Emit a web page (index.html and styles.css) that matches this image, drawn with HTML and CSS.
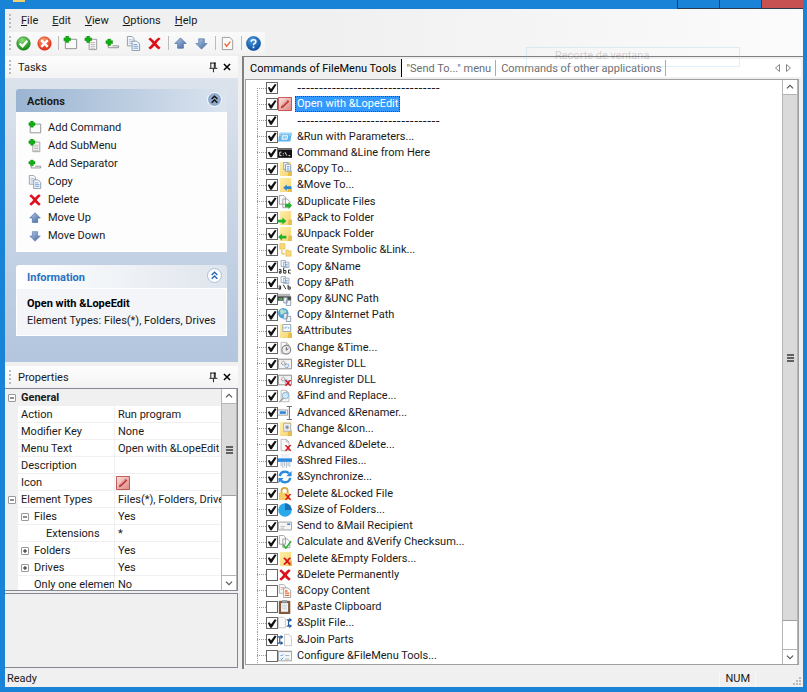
FILE: index.html
```html
<!DOCTYPE html>
<html lang="en">
<head>
    <meta charset="UTF-8">
    <meta name="viewport" content="width=device-width, initial-scale=1.0">
    <title>FileMenu Tools</title>
    <link rel="stylesheet" href="styles.css">
</head>
<body>

    <!-- Icon set -->
    <svg class="sprite" aria-hidden="true">
        <defs>
            <radialGradient id="g-green" cx="40%" cy="25%" r="75%"><stop offset="0" stop-color="#8fdc7c"/><stop offset="1" stop-color="#148a14"/></radialGradient>
            <radialGradient id="g-red" cx="40%" cy="25%" r="75%"><stop offset="0" stop-color="#ff9a6b"/><stop offset="1" stop-color="#e22a12"/></radialGradient>
            <radialGradient id="g-blue" cx="40%" cy="25%" r="75%"><stop offset="0" stop-color="#4b9be0"/><stop offset="1" stop-color="#0a4fa0"/></radialGradient>
            <linearGradient id="g-arrow" x1="0" y1="0" x2="1" y2="1"><stop offset="0" stop-color="#b4c8e4"/><stop offset="1" stop-color="#44689f"/></linearGradient>
            <linearGradient id="g-folder" x1="0" y1="0" x2="1" y2="1"><stop offset="0" stop-color="#fff0a8"/><stop offset="1" stop-color="#f5d272"/></linearGradient>
            <linearGradient id="g-pen" x1="0" y1="0" x2="1" y2="1"><stop offset="0" stop-color="#fbe3e1"/><stop offset="1" stop-color="#df8480"/></linearGradient>
        </defs>
        <symbol id="plus" viewBox="0 0 16 16"><path d="M3 0h3v2h2v3H6v2H3V5H1V2h2z" fill="#10b010" stroke="#078007" stroke-width=".5"/></symbol>
        <symbol id="page" viewBox="0 0 16 16"><path d="M3.500 1.500h6l3 3v10h-9z" fill="#fafafa" stroke="#b5b5b5"/><path d="M9.500 1.500v3h3" fill="none" stroke="#b5b5b5"/></symbol>
        <symbol id="folder" viewBox="0 0 16 16"><path d="M2 0h13v16H2z" fill="url(#g-folder)"/><path d="M12 10h4v6h-5z" fill="#e8bd4c"/></symbol>
        <symbol id="pages" viewBox="0 0 16 16"><path d="M1.500.5h5l2 2v8h-7z" fill="#f5f7fa" stroke="#909aa6"/><path d="M3 4h4M3 6h4M3 8h3" stroke="#a9bdd3"/><path d="M6.500 5.500h5l3 3v7h-8z" fill="#f3f7fc" stroke="#8796a8"/><path d="M8 9h4M8 11h5M8 13h5" stroke="#6c9fd8"/></symbol>
        <symbol id="cross" viewBox="0 0 16 16"><path d="M1.500 3.500l2-2q2.500 2 4.500 4 2-2.500 4.500-4l2 1.500q-2.500 2-4.500 5 2 2.500 4.500 4.500l-2 2q-2.500-2-4.500-4-2 2-4.500 4l-2-2q2.500-2 4.500-4.500-2-2.500-4.500-4.500z" fill="#dd0f1b"/></symbol>
        <symbol id="ok" viewBox="0 0 16 16"><circle cx="8" cy="8" r="7.200" fill="url(#g-green)" stroke="#128012" stroke-width=".6"/><path d="M4 8l3 3 5-6" fill="none" stroke="#fff" stroke-width="2.500"/></symbol>
        <symbol id="cancel" viewBox="0 0 16 16"><circle cx="8" cy="8" r="7.200" fill="url(#g-red)" stroke="#d52b12" stroke-width=".6"/><path d="M4.500 4.500l7 7m0-7l-7 7" stroke="#fff" stroke-width="2.600"/></symbol>
        <symbol id="add-command" viewBox="0 0 16 16"><path d="M2.500 5V13.500h12v-10H8" fill="#fafafa" stroke="#8d8d8d"/><use href="#plus"/></symbol>
        <symbol id="add-submenu" viewBox="0 0 16 16"><path d="M5.500 3.500h8v11h-8z" fill="#fafafa" stroke="#999"/><path d="M7 7h5M7 9h5M7 11h5M7 13h5" stroke="#b5b5b5"/><use href="#plus"/></symbol>
        <symbol id="add-separator" viewBox="0 0 16 16"><path d="M3.500 10v2.500h11v-2H8" fill="none" stroke="#8d8d8d"/><use href="#plus" y="3"/></symbol>
        <symbol id="up" viewBox="0 0 16 16"><path d="M8 2l6 6h-3v5H5V8H2z" fill="url(#g-arrow)" stroke="#466da5" stroke-width=".8"/></symbol>
        <symbol id="down" viewBox="0 0 16 16"><path d="M8 14l6-6h-3V3H5v5H2z" fill="url(#g-arrow)" stroke="#5f82b5" stroke-width=".8"/></symbol>
        <symbol id="options" viewBox="0 0 16 16"><path d="M2.500 1.500h8l3 3v10h-11z" fill="#fafafa" stroke="#999"/><path d="M5 8l2 3 4-5" fill="none" stroke="#ee6a35" stroke-width="1.500"/></symbol>
        <symbol id="help" viewBox="0 0 16 16"><circle cx="8" cy="8" r="7.500" fill="url(#g-blue)" stroke="#0b4d99" stroke-width=".6"/><path d="M5.500 6.200Q5.500 4 8 4t2.500 2Q10.500 7.300 9 8 8 8.500 8 9.800M8 11.300v1.800" fill="none" stroke="#fff" stroke-width="1.700"/></symbol>
        <symbol id="pin" viewBox="0 0 16 16"><path d="M5.500 3v6M5 3.500h6M9.500 3v6M10.500 3v6M4 9.500h9M8.500 10v4" fill="none" stroke="#000"/></symbol>
        <symbol id="close" viewBox="0 0 16 16"><path d="M4.500 4.500l7 7m0-7l-7 7" stroke="#000" stroke-width="1.700"/></symbol>
        <symbol id="chevrons" viewBox="0 0 16 16"><path d="M4.500 7.500L8 4l3.500 3.500M4.500 12L8 8.500l3.500 3.500" fill="none" stroke="currentColor" stroke-width="1.700"/></symbol>
        <symbol id="chev-up" viewBox="0 0 16 16"><path d="M4.500 9.500L8 6l3.500 3.500" fill="none" stroke="#555" stroke-width="1.300"/></symbol>
        <symbol id="chev-down" viewBox="0 0 16 16"><path d="M4.500 6.500L8 10l3.500-3.500" fill="none" stroke="#555" stroke-width="1.300"/></symbol>

        <symbol id="pencil" viewBox="0 0 16 16"><path d="M.5.5h15v15H.5z" fill="url(#g-pen)" stroke="#b9413f"/><path d="M3 13l1-3 7-7 2 2-7 7z" fill="#b93a3a"/><path d="M5 10l6-6" stroke="#f1b3ae"/></symbol>
        <symbol id="run" viewBox="0 0 16 16"><path d="M2 3h14l-2 10H0z" fill="#5fb4ea"/><path d="M2 3h14l-.4 2H1.600z" fill="#a3d8f5"/><path d="M5 6.500h6l-.6 4h-6z" fill="#8fcdf4" stroke="#fff"/><path d="M2 6.500h1M13 6.500h1" stroke="#fff"/></symbol>
        <symbol id="cmd" viewBox="0 0 16 16"><path d="M0 2.500h16v11H0z" fill="#111"/><path d="M0 2.500h16v2H0z" fill="#777"/><path d="M4 7H2v4h2M6 8v1M6 10v1M8 7l2 4M12 11h2" fill="none" stroke="#fff"/></symbol>
        <symbol id="copy-to" viewBox="0 0 16 16"><use href="#folder"/><path d="M6.500.5h5v8h-5z" fill="#fff" stroke="#8b9db3"/><path d="M8.500 2.500h5l1 1v7h-6z" fill="#fff" stroke="#7d92ad"/><path d="M10 5h3M10 7h3M10 9h3" stroke="#5795d8"/></symbol>
        <symbol id="move-to" viewBox="0 0 16 16"><use href="#folder"/><path d="M6 11l4-3.500V9.500h5v3h-5v2z" fill="#2b85d2"/></symbol>
        <symbol id="duplicate" viewBox="0 0 16 16"><path d="M1.500.5h5l2 2v8h-7zM5.500 4.500h5l3 3v7h-8z" fill="#fafafa" stroke="#999"/><path d="M8 10h4V8l4 4-4 4v-2H8z" fill="#22b32c"/></symbol>
        <symbol id="pack" viewBox="0 0 16 16"><use href="#folder"/><path d="M0 10h5V7.500l4.500 4L5 15.500V13H0z" fill="#22b32c"/></symbol>
        <symbol id="unpack" viewBox="0 0 16 16"><use href="#folder"/><path d="M9.500 10h-5V7.500l-4.500 4 4.500 4V13h5z" fill="#22b32c"/></symbol>
        <symbol id="symlink" viewBox="0 0 16 16"><path d="M3 0h4v1h1v6H2V1h1zM9 8h3v1h3v6H9z" fill="#f8d878" stroke="#e5bb50" stroke-width=".7"/><path d="M4.500 8v4.500H8" fill="none" stroke="#d9a536"/></symbol>
        <symbol id="copy-name" viewBox="0 0 16 16"><path d="M3.500.5h5v7h-5zM6.500 2.500h6v6h-6z" fill="#f3f7fc" stroke="#98a6b8"/><path d="M8 5h3M8 7h3" stroke="#6c9fd8"/><path d="M1 11h2.500v4H1.500v-2h2M6.500 9v6h2.500v-3H6.500M14.500 11.500H12V15h2.500" fill="none" stroke="#111"/></symbol>
        <symbol id="copy-path" viewBox="0 0 16 16"><path d="M3.500.5h5v7h-5zM6.500 2.500h6v6h-6z" fill="#f3f7fc" stroke="#98a6b8"/><path d="M8 5h3M8 7h3" stroke="#6c9fd8"/><path d="M.5 11.500H3V15H1v-1.500h2M6 10l3 5M11.500 10v5H14v-2.500h-2.500" fill="none" stroke="#111"/></symbol>
        <symbol id="copy-unc" viewBox="0 0 16 16"><path d="M0 2h14v4H0z" fill="#b8b8b8"/><path d="M0 5h15v5H0z" fill="#4c4c4c"/><path d="M1 7h4v2H1z" fill="#37c050"/><path d="M6.500 6.500h4v6h-4zM9.500 9.500h5v6h-5z" fill="#f3f7fc" stroke="#8796a8"/></symbol>
        <symbol id="copy-net" viewBox="0 0 16 16"><circle cx="6" cy="6" r="6" fill="#4da3d8"/><path d="M2 3q3-3 5 0t-2 4-2-1M7 1l3 3-2 2" fill="#b7e0c9"/><path d="M6.500 6.500h4v6h-4zM9.500 9.500h5v6h-5z" fill="#f3f7fc" stroke="#8796a8"/></symbol>
        <symbol id="attributes" viewBox="0 0 16 16"><use href="#folder"/><path d="M5.500.5h9v8h-9z" fill="#fafcff" stroke="#8da0b6"/><path d="M7 4l1 1 2-2M11 4.500h2" fill="none" stroke="#3f86d0"/></symbol>
        <symbol id="time" viewBox="0 0 16 16"><use href="#page"/><circle cx="9.500" cy="10" r="5" fill="#eee" stroke="#888" stroke-width="1.300"/><path d="M9.500 7v3.500L12 8.500" fill="none" stroke="#555"/></symbol>
        <symbol id="dll" viewBox="0 0 16 16"><path d="M.5 2.500h15v11H.5z" fill="#f4f4f4" stroke="#888"/><path d="M.5 2.500h15v1H.5z" fill="#aaa"/><circle cx="6" cy="7" r="2" fill="none" stroke="#999" stroke-width="1.500" stroke-dasharray="1 .6"/><circle cx="10" cy="10" r="2" fill="none" stroke="#6c9dc8" stroke-width="1.500" stroke-dasharray="1 .6"/></symbol>
        <symbol id="undll" viewBox="0 0 16 16"><use href="#dll"/><use href="#cross" x="7" y="7" width="9" height="9"/></symbol>
        <symbol id="find" viewBox="0 0 16 16"><use href="#page"/><circle cx="8.500" cy="7.500" r="3.700" fill="#cde8fa" stroke="#88aac5"/><path d="M6 10.500L1.500 15" stroke="#999" stroke-width="1.600"/></symbol>
        <symbol id="rename" viewBox="0 0 16 16"><path d="M0 4.500h11v6H0" fill="#f0f4f8" stroke="#999"/><path d="M2 6h7v3H2z" fill="#2b8ae0"/><path d="M10 .5h6M13 .5v15M10 15.500h6" stroke="#555"/></symbol>
        <symbol id="change-icon" viewBox="0 0 16 16"><use href="#folder"/><path d="M6.500 1.500h8v9h-8z" fill="#f2f2f2" stroke="#aaa"/><path d="M8 6h5M10.500 3.500v5M9 4l3 4M12 4L9 8" stroke="#6c83a0" stroke-width=".8"/></symbol>
        <symbol id="adv-delete" viewBox="0 0 16 16"><use href="#page"/><use href="#cross" x="7" y="7" width="9" height="9"/></symbol>
        <symbol id="shred" viewBox="0 0 16 16"><path d="M3 0h10v5H3z" fill="#eef2f6"/><path d="M0 5h16v4H0z" fill="#2b8ae0"/><path d="M3.500 9v5M5.500 9v7M7.500 9v5M9.500 9v7M11.500 9v5M13.500 9v6" stroke="#a7b4c2"/></symbol>
        <symbol id="sync" viewBox="0 0 16 16"><path d="M2 7q1-5 6-5 3 0 4.500 2" fill="none" stroke="#2b8ae0" stroke-width="2.800"/><path d="M15.500 1v6h-6z" fill="#2b8ae0"/><path d="M14 9q-1 5-6 5-3 0-4.500-2" fill="none" stroke="#2b8ae0" stroke-width="2.800"/><path d="M.5 15V9h6z" fill="#2b8ae0"/></symbol>
        <symbol id="locked" viewBox="0 0 16 16"><path d="M4 7V4q0-3 3.500-3T11 4v3" fill="none" stroke="#d9a536" stroke-width="2"/><path d="M1 6.500h12V15H1z" fill="#f3cd62"/><use href="#cross" x="7" y="7" width="9" height="9"/></symbol>
        <symbol id="size" viewBox="0 0 16 16"><circle cx="8" cy="8" r="7.700" fill="#29a9ea"/><path d="M8 8V.3A7.700 7.700 0 0 1 15.700 8z" fill="#1b6fb5"/></symbol>
        <symbol id="mail" viewBox="0 0 16 16"><path d="M.5 3.500h15v9H.5z" fill="#f5f5f5" stroke="#999"/><path d="M10.500 5h3.500v2h-3.500z" fill="#4a8ac8"/><path d="M3 8.500h5M3 10.500h4" stroke="#bbb"/></symbol>
        <symbol id="checksum" viewBox="0 0 16 16"><path d="M1.500.5h5l2 2v8h-7zM5.500 4.500h5l3 3v7h-8z" fill="#fafafa" stroke="#999"/><path d="M6 11l3 4 6-8" fill="none" stroke="#2ead3a" stroke-width="1.800"/></symbol>
        <symbol id="del-empty" viewBox="0 0 16 16"><use href="#folder"/><use href="#cross" x="5" y="5" width="11" height="11"/></symbol>
        <symbol id="copy-content" viewBox="0 0 16 16"><path d="M1.500.5h5l2 2v8h-7z" fill="#fafafa" stroke="#aaa"/><path d="M3 4h4M3 6h4" stroke="#f3a58c"/><path d="M6.500 4.500h5l3 3v8h-8z" fill="#fff" stroke="#999"/><path d="M8 8h3M8 10.500h5M8 13h5" stroke="#ee6a35" stroke-width="1.500"/></symbol>
        <symbol id="paste" viewBox="0 0 16 16"><path d="M1.500 1.500h12v14h-12z" fill="#8a5a3c" stroke="#6b432b"/><path d="M3.500 3.500h8v10h-8z" fill="#eef3f6"/><path d="M4.500 0h6v3h-6z" fill="#9aa2a8"/><path d="M5 6h5M5 8h5M5 10h5" stroke="#c3d0d8"/></symbol>
        <symbol id="split" viewBox="0 0 16 16"><path d="M.5 1.500h6l2 2v10h-8z" fill="#fafafa" stroke="#c2c2c2"/><path d="M10 4.500h5M10 11.500h5M12 4v8" stroke="#24589c" stroke-width="1.300"/><path d="M13 2l3 2.500L13 7zM13 9l3 2.500-3 2.500z" fill="#24589c"/></symbol>
        <symbol id="join" viewBox="0 0 16 16"><path d="M7.500 1.500h5l3 3v10h-8z" fill="#fafafa" stroke="#c2c2c2"/><path d="M0 4.500h5M0 11.500h5M2 4v8" stroke="#24589c" stroke-width="1.300"/><path d="M3 2l3 2.500L3 7zM3 9l3 2.500L3 14z" fill="#24589c"/></symbol>
        <symbol id="configure" viewBox="0 0 16 16"><path d="M.5 2.500h15v11H.5z" fill="#f3f7fa" stroke="#999"/><path d="M.5 2.500h15v1H.5z" fill="#999"/><path d="M3 7l1 1 2-2M3 11l1 1 2-2" fill="none" stroke="#2b8ae0"/><path d="M8 7.500h5M8 11.500h5" stroke="#aaa"/></symbol>
    </svg>

    <div class="window">
        <div class="titlebar">
            <span class="app-icon"></span>
            <div class="window-buttons">
                <button aria-label="Minimize"></button>
                <button aria-label="Maximize"></button>
                <button class="close" aria-label="Close"></button>
            </div>
        </div>

        <div class="bars">
            <nav class="menubar grip">
                <button><u>F</u>ile</button>
                <button><u>E</u>dit</button>
                <button><u>V</u>iew</button>
                <button><u>O</u>ptions</button>
                <button><u>H</u>elp</button>
            </nav>
            <div class="toolbar grip">
                <button aria-label="Apply"><svg><use href="#ok"/></svg></button>
                <button aria-label="Discard"><svg><use href="#cancel"/></svg></button>
                <i></i>
                <button aria-label="Add Command"><svg><use href="#add-command"/></svg></button>
                <button aria-label="Add SubMenu"><svg><use href="#add-submenu"/></svg></button>
                <button aria-label="Add Separator"><svg><use href="#add-separator"/></svg></button>
                <button aria-label="Copy"><svg><use href="#pages"/></svg></button>
                <button aria-label="Delete"><svg><use href="#cross"/></svg></button>
                <i></i>
                <button aria-label="Move Up"><svg><use href="#up"/></svg></button>
                <button aria-label="Move Down"><svg><use href="#down"/></svg></button>
                <i></i>
                <button aria-label="Options"><svg><use href="#options"/></svg></button>
                <i></i>
                <button aria-label="Help"><svg><use href="#help"/></svg></button>
            </div>
        </div>

        <div class="main">
            <aside class="sidebar">
                <header class="pane-title grip">
                    <span>Tasks</span>
                    <button aria-label="Pin"><svg><use href="#pin"/></svg></button>
                    <button aria-label="Close"><svg><use href="#close"/></svg></button>
                </header>
                <div class="tasks">
                    <section class="card actions">
                        <h2>Actions <button aria-label="Collapse"><svg><use href="#chevrons"/></svg></button></h2>
                        <div class="card-body">
                            <a href="#"><svg><use href="#add-command"/></svg>Add Command</a>
                            <a href="#"><svg><use href="#add-submenu"/></svg>Add SubMenu</a>
                            <a href="#"><svg><use href="#add-separator"/></svg>Add Separator</a>
                            <a href="#"><svg><use href="#pages"/></svg>Copy</a>
                            <a href="#"><svg><use href="#cross"/></svg>Delete</a>
                            <a href="#"><svg><use href="#up"/></svg>Move Up</a>
                            <a href="#"><svg><use href="#down"/></svg>Move Down</a>
                        </div>
                    </section>
                    <section class="card info">
                        <h2>Information <button aria-label="Collapse"><svg><use href="#chevrons"/></svg></button></h2>
                        <div class="card-body">
                            <strong>Open with &amp;LopeEdit</strong>
                            <p>Element Types: Files(*), Folders, Drives</p>
                        </div>
                    </section>
                </div>

                <header class="pane-title grip">
                    <span>Properties</span>
                    <button aria-label="Pin"><svg><use href="#pin"/></svg></button>
                    <button aria-label="Close"><svg><use href="#close"/></svg></button>
                </header>
                <div class="properties">
                    <div class="table-wrap">
                        <table>
                            <colgroup><col class="col-gutter"><col class="col-name"><col></colgroup>
                            <tr class="group"><td><button class="box minus" aria-label="Collapse"></button></td><th colspan="2">General</th></tr>
                            <tr><td></td><th>Action</th><td>Run program</td></tr>
                            <tr><td></td><th>Modifier Key</th><td>None</td></tr>
                            <tr><td></td><th>Menu Text</th><td>Open with &amp;LopeEdit</td></tr>
                            <tr><td></td><th>Description</th><td></td></tr>
                            <tr><td></td><th>Icon</th><td class="pic"><svg><use href="#pencil"/></svg></td></tr>
                            <tr><td><button class="box minus" aria-label="Collapse"></button></td><th>Element Types</th><td>Files(*), Folders, Drives</td></tr>
                            <tr><td></td><th><button class="box minus" aria-label="Collapse"></button>Files</th><td>Yes</td></tr>
                            <tr><td></td><th class="level-2">Extensions</th><td>*</td></tr>
                            <tr><td></td><th><button class="box plus" aria-label="Expand"></button>Folders</th><td>Yes</td></tr>
                            <tr><td></td><th><button class="box plus" aria-label="Expand"></button>Drives</th><td>Yes</td></tr>
                            <tr><td></td><th class="level-1">Only one elemen</th><td>No</td></tr>
                        </table>
                    </div>
                    <div class="scrollbar">
                        <button aria-label="Scroll up"><svg><use href="#chev-up"/></svg></button>
                        <div class="track"><div class="thumb half"><span></span></div></div>
                        <button aria-label="Scroll down"><svg><use href="#chev-down"/></svg></button>
                    </div>
                </div>
                <div class="description"></div>
            </aside>

            <main class="commands">
                <div class="tabs">
                    <button class="active">Commands of FileMenu Tools</button>
                    <button>"Send To..." menu</button>
                    <button>Commands of other applications</button>
                    <svg class="tab-arrows" viewBox="0 0 18 10"><path d="M5.500 1.500v7L1.500 5zM12.500 1.500v7l4-3.500z" fill="none" stroke="#888"/></svg>
                </div>
                <div class="tree">
                    <ul>
                        <li class="separator"><input type="checkbox" id="c1" checked><svg></svg><label for="c1">---------------------------------</label></li>
                        <li class="selected"><input type="checkbox" id="c2" checked><svg><use href="#pencil"/></svg><label for="c2">Open with &amp;LopeEdit</label></li>
                        <li class="separator"><input type="checkbox" id="c3" checked><svg></svg><label for="c3">---------------------------------</label></li>
                        <li><input type="checkbox" id="c4" checked><svg><use href="#run"/></svg><label for="c4">&amp;Run with Parameters...</label></li>
                        <li><input type="checkbox" id="c5" checked><svg><use href="#cmd"/></svg><label for="c5">Command &amp;Line from Here</label></li>
                        <li><input type="checkbox" id="c6" checked><svg><use href="#copy-to"/></svg><label for="c6">&amp;Copy To...</label></li>
                        <li><input type="checkbox" id="c7" checked><svg><use href="#move-to"/></svg><label for="c7">&amp;Move To...</label></li>
                        <li><input type="checkbox" id="c8" checked><svg><use href="#duplicate"/></svg><label for="c8">&amp;Duplicate Files</label></li>
                        <li><input type="checkbox" id="c9" checked><svg><use href="#pack"/></svg><label for="c9">&amp;Pack to Folder</label></li>
                        <li><input type="checkbox" id="c10" checked><svg><use href="#unpack"/></svg><label for="c10">&amp;Unpack Folder</label></li>
                        <li><input type="checkbox" id="c11" checked><svg><use href="#symlink"/></svg><label for="c11">Create Symbolic &amp;Link...</label></li>
                        <li><input type="checkbox" id="c12" checked><svg><use href="#copy-name"/></svg><label for="c12">Copy &amp;Name</label></li>
                        <li><input type="checkbox" id="c13" checked><svg><use href="#copy-path"/></svg><label for="c13">Copy &amp;Path</label></li>
                        <li><input type="checkbox" id="c14" checked><svg><use href="#copy-unc"/></svg><label for="c14">Copy &amp;UNC Path</label></li>
                        <li><input type="checkbox" id="c15" checked><svg><use href="#copy-net"/></svg><label for="c15">Copy &amp;Internet Path</label></li>
                        <li><input type="checkbox" id="c16" checked><svg><use href="#attributes"/></svg><label for="c16">&amp;Attributes</label></li>
                        <li><input type="checkbox" id="c17" checked><svg><use href="#time"/></svg><label for="c17">Change &amp;Time...</label></li>
                        <li><input type="checkbox" id="c18" checked><svg><use href="#dll"/></svg><label for="c18">&amp;Register DLL</label></li>
                        <li><input type="checkbox" id="c19" checked><svg><use href="#undll"/></svg><label for="c19">&amp;Unregister DLL</label></li>
                        <li><input type="checkbox" id="c20" checked><svg><use href="#find"/></svg><label for="c20">&amp;Find and Replace...</label></li>
                        <li><input type="checkbox" id="c21" checked><svg><use href="#rename"/></svg><label for="c21">Advanced &amp;Renamer...</label></li>
                        <li><input type="checkbox" id="c22" checked><svg><use href="#change-icon"/></svg><label for="c22">Change &amp;Icon...</label></li>
                        <li><input type="checkbox" id="c23" checked><svg><use href="#adv-delete"/></svg><label for="c23">Advanced &amp;Delete...</label></li>
                        <li><input type="checkbox" id="c24" checked><svg><use href="#shred"/></svg><label for="c24">&amp;Shred Files...</label></li>
                        <li><input type="checkbox" id="c25" checked><svg><use href="#sync"/></svg><label for="c25">&amp;Synchronize...</label></li>
                        <li><input type="checkbox" id="c26" checked><svg><use href="#locked"/></svg><label for="c26">Delete &amp;Locked File</label></li>
                        <li><input type="checkbox" id="c27" checked><svg><use href="#size"/></svg><label for="c27">&amp;Size of Folders...</label></li>
                        <li><input type="checkbox" id="c28" checked><svg><use href="#mail"/></svg><label for="c28">Send to &amp;Mail Recipient</label></li>
                        <li><input type="checkbox" id="c29" checked><svg><use href="#checksum"/></svg><label for="c29">Calculate and &amp;Verify Checksum...</label></li>
                        <li><input type="checkbox" id="c30" checked><svg><use href="#del-empty"/></svg><label for="c30">Delete &amp;Empty Folders...</label></li>
                        <li><input type="checkbox" id="c31"><svg><use href="#cross"/></svg><label for="c31">&amp;Delete Permanently</label></li>
                        <li><input type="checkbox" id="c32"><svg><use href="#copy-content"/></svg><label for="c32">&amp;Copy Content</label></li>
                        <li><input type="checkbox" id="c33"><svg><use href="#paste"/></svg><label for="c33">&amp;Paste Clipboard</label></li>
                        <li><input type="checkbox" id="c34" checked><svg><use href="#split"/></svg><label for="c34">&amp;Split File...</label></li>
                        <li><input type="checkbox" id="c35" checked><svg><use href="#join"/></svg><label for="c35">&amp;Join Parts</label></li>
                        <li><input type="checkbox" id="c36"><svg><use href="#configure"/></svg><label for="c36">Configure &amp;FileMenu Tools...</label></li>
                    </ul>
                    <div class="scrollbar">
                        <button aria-label="Scroll up"><svg><use href="#chev-up"/></svg></button>
                        <div class="track"><div class="thumb"><span></span></div></div>
                        <button aria-label="Scroll down"><svg><use href="#chev-down"/></svg></button>
                    </div>
                </div>
            </main>
        </div>

        <footer class="statusbar">
            <span>Ready</span>
            <span class="num">NUM</span>
            <svg class="resize" viewBox="0 0 10 10"><path d="M7 1h2v2H7zM4 4h2v2H4zM7 4h2v2H7zM1 7h2v2H1zM4 7h2v2H4zM7 7h2v2H7z" fill="#bbb"/></svg>
        </footer>

        <!-- fading tooltip -->
        <div class="tooltip">Recorte de ventana</div>
    </div>

</body>
</html>
```
FILE: styles.css
```css
:root {
    --blue: #1883d7;
    --face: #f0f0f0;
    --line: #a0a0a0;
    --text: #1a1a1a;
}

* {
    box-sizing: border-box;
}

body {
    margin: 0;
    font-family: Roboto, "Open Sans", sans-serif;
    font-size: 11px;
    line-height: 16px;
    color: var(--text);
}

button {
    margin: 0;
    padding: 0;
    border: none;
    background: none;
    font: inherit;
    color: inherit;
}

svg {
    display: block;
    flex: none;
    width: 16px;
    height: 16px;
}

.sprite {
    position: absolute;
    width: 0;
    height: 0;
}

.window {
    position: relative;
    display: flex;
    flex-direction: column;
    min-height: 100vh;
    padding: 0 4px 5px 5px;
    background: var(--blue);
}

/* title bar */
.titlebar {
    display: flex;
    justify-content: space-between;
    height: 9px;
}

.app-icon {
    width: 12px;
    height: 2px;
    margin-left: 8px;
    background: #f0d070;
}

.window-buttons {
    display: flex;
}

.window-buttons button {
    width: 42px;
    border: 1px solid #2b3a4c;
    border-width: 0 0 1px 1px;
}

.window-buttons .close {
    background: #c75050;
}

/* menu and toolbar */
.bars {
    background: linear-gradient(90deg, #f0f0f0 40%, #fbfbfb);
}

.grip::before {
    content: "";
    flex: none;
    width: 2px;
    height: 14px;
    background: repeating-linear-gradient(#bbb 0 2px, transparent 2px 4px);
}

.menubar {
    display: flex;
    align-items: center;
    gap: 14px;
    height: 23px;
    padding-left: 4px;
}

.menubar button:first-of-type {
    margin-left: -4px;
}

.toolbar {
    display: flex;
    align-items: center;
    gap: 5px;
    width: 257px;
    height: 22px;
    margin: 0 0 2px 3px;
    padding-left: 1px;
    border-radius: 3px;
    background: linear-gradient(#fafafa, #f3f3f3);
}

.toolbar i {
    width: 1px;
    height: 14px;
    margin-right: -1px;
    background: #bbb;
}

.toolbar svg {
    width: 15px;
    height: 15px;
    margin-right: 1px;
}

/* left side */
.main {
    flex: 1;
    display: flex;
    gap: 4px;
    background: var(--face);
}

.sidebar {
    display: flex;
    flex-direction: column;
    width: 233px;
}

.pane-title {
    display: flex;
    align-items: center;
    height: 22px;
    padding: 0 4px;
    background: linear-gradient(#fdfdfd, #f3f3f3);
}

.pane-title span {
    flex: 1;
    padding: 2px 0 0 7px;
}

.pane-title svg {
    width: 14px;
    height: 14px;
}

.tasks {
    margin-bottom: 4px;
    padding: 11px 11px 26px;
    background: linear-gradient(#dce3ec, #b3c6de);
}

.card + .card {
    margin-top: 13px;
}

.card h2 {
    display: flex;
    align-items: center;
    justify-content: space-between;
    height: 23px;
    margin: 0;
    padding: 2px 5px 0 11px;
    border-radius: 3px 3px 0 0;
    font-size: 11px;
}

.card h2 button {
    display: grid;
    place-items: center;
    width: 15px;
    height: 15px;
    margin-bottom: 5px;
    border: 1px solid #fff;
    border-radius: 50%;
}

.card h2 svg {
    width: 13px;
    height: 13px;
}

.actions h2 {
    background: linear-gradient(90deg, #9ab4d2, #dbe4ef);
}

.actions h2 button {
    background: #8faace;
    color: #111;
}

.info h2 {
    background: linear-gradient(90deg, #fff, #dfe5ed);
    color: #2673c3;
}

.info h2 button {
    border-color: #a9bfdd;
    background: #fff;
    color: #2268b5;
}

.card-body {
    border: 1px solid #fff;
    padding: 6px 11px;
    background: #fdfdfd;
}

.card-body a {
    display: flex;
    align-items: center;
    gap: 6px;
    height: 18px;
    color: var(--text);
    text-decoration: none;
}

.card-body a svg {
    width: 14px;
    height: 14px;
}

.info .card-body {
    padding: 6px 10px;
    background: #f3f5f9;
}

.info strong {
    display: block;
    line-height: 18px;
    color: #000;
}

.info p {
    margin: 0;
    white-space: nowrap;
}

/* property grid */
.properties {
    display: flex;
    height: 203px;
    border: 1px solid #828790;
    border-left: none;
    background: #fff;
}

.table-wrap {
    flex: 1;
    min-width: 0;
    overflow: hidden;
}

table {
    width: 100%;
    table-layout: fixed;
    border-collapse: separate;
    border-spacing: 0;
}

.col-gutter {
    width: 13px;
}

.col-name {
    width: 97px;
}

tr {
    height: 17px;
}

th,
td {
    height: 17px;
    padding: 1px 0 0 3px;
    border-bottom: 1px solid var(--face);
    overflow: hidden;
    font-weight: normal;
    line-height: 15px;
    text-align: left;
    white-space: nowrap;
}

th {
    border-right: 1px solid var(--face);
}

td:first-child {
    background: var(--face);
}

.group th {
    background: var(--face);
    font-weight: bold;
}

.level-1 {
    padding-left: 16px;
}

.level-2 {
    padding-left: 28px;
}

.pic {
    padding-left: 1px;
}

.pic svg {
    width: 14px;
    height: 14px;
}

.box {
    position: relative;
    display: inline-block;
    width: 8px;
    height: 8px;
    border: 1px solid #999;
    border-radius: 1px;
    background: #fff;
}

th .box {
    margin-right: 5px;
}

.box::before,
.plus::after {
    content: "";
    position: absolute;
    top: 50%;
    left: 50%;
    width: 4px;
    height: 1px;
    background: #222;
    transform: translate(-50%, -50%);
}

.plus::after {
    width: 1px;
    height: 4px;
}

.description {
    flex: 1;
    margin: 2px 0 1px;
    border: 1px solid #828790;
    border-left: none;
}

/* scrollbars */
.scrollbar {
    display: flex;
    flex-direction: column;
    width: 16px;
    border: 1px solid #b5b5b5;
    border-width: 0 1px;
    background: #fff;
}

.scrollbar button {
    height: 15px;
    border-bottom: 1px solid #b5b5b5;
}

.scrollbar .track + button {
    border-top: 1px solid #b5b5b5;
    border-bottom: none;
}

.scrollbar button svg {
    width: 14px;
    height: 14px;
}

.track {
    flex: 1;
}

.thumb {
    display: grid;
    place-items: center;
    height: 95%;
    border-bottom: 1px solid var(--line);
    background: #dadada;
}

.thumb.half {
    height: 54%;
}

.thumb span {
    width: 7px;
    height: 8px;
    background: repeating-linear-gradient(#606060 0 2px, #dadada 2px 3px);
}

/* right side */
.commands {
    flex: 1;
    display: flex;
    flex-direction: column;
    min-width: 0;
    padding: 2px 4px 4px 1px;
    border: 1px solid #808080;
    border-left-width: 2px;
    border-right: none;
    border-bottom: none;
    background: var(--face);
}

.tabs {
    display: flex;
    align-items: center;
    height: 18px;
    margin: 0 -2px 2px 0;
    background: #fff;
}

.tabs button {
    height: 16px;
    padding: 1px 4px 0 5px;
    border-right: 1px solid #aaa;
    color: #6d6d6d;
    white-space: nowrap;
}

.tabs .active {
    height: 18px;
    border-right: 1px solid #000;
    background: var(--face);
    color: #000;
}

.tab-arrows {
    width: 18px;
    height: 10px;
    margin: 0 9px 0 auto;
}

.tree {
    flex: 1;
    display: flex;
    border: 1px solid var(--line);
    background: #fff;
}

.tree ul {
    flex: 1;
    display: grid;
    grid-auto-rows: 1fr;
    margin: 0;
    padding: 0 0 0 11px;
    list-style: none;
}

.tree li {
    display: flex;
    align-items: center;
    background: repeating-linear-gradient(#999 0 1px, #fff 1px 2px) 0 0 / 1px 100% no-repeat;
}

.tree li:first-child {
    background-position: 0 100%;
    background-size: 1px 50%;
}

.tree li::before {
    content: "";
    width: 9px;
    height: 1px;
    background: repeating-linear-gradient(90deg, #999 0 1px, #fff 1px 2px);
}

.tree input {
    appearance: none;
    flex: none;
    width: 12px;
    height: 12px;
    margin: 0;
    border: 1px solid #666;
    background: #fff;
}

.tree input:checked::before {
    content: "";
    display: block;
    width: 10px;
    height: 10px;
    background: #111;
    clip-path: polygon(8% 45%, 25% 38%, 40% 58%, 78% 8%, 96% 15%, 48% 92%, 32% 92%);
}

.tree li svg {
    width: 14px;
    height: 14px;
}

.tree label {
    margin-left: 3px;
    padding: 0 2px;
    line-height: 16px;
    white-space: nowrap;
}

.tree .separator label {
    font-family: "DejaVu Sans", sans-serif;
    font-size: 12px;
}

.tree .selected label {
    background: #3399ff;
    color: #fff;
    outline: 1px dotted #14508c;
    outline-offset: -1px;
}

/* status bar */
.statusbar {
    display: flex;
    align-items: center;
    height: 18px;
    padding: 2px 0 0 2px;
    background: var(--face);
}

.statusbar .num {
    margin-left: auto;
    padding: 0 5px;
    border: 1px solid #f7f7f7;
    border-width: 0 1px;
}

.resize {
    width: 10px;
    height: 10px;
    margin: 4px 1px 0 36px;
}

.tooltip {
    position: absolute;
    top: 47px;
    right: 67px;
    width: 214px;
    height: 20px;
    padding: 0 28px;
    border: 1px solid rgba(150, 205, 240, .3);
    color: rgba(0, 0, 0, .18);
    white-space: nowrap;
}
```
